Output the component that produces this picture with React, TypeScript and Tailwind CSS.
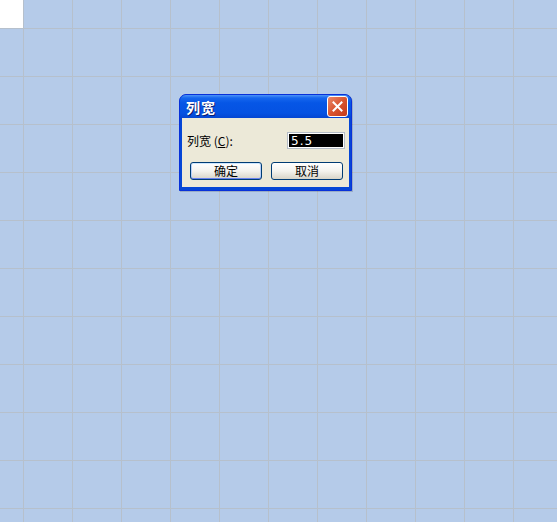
import React from "react";

const COLS = 12;
const ROWS = 12;

export default function App() {
  const cells: React.ReactNode[] = [];
  for (let r = 0; r < ROWS; r++) {
    for (let c = 0; c < COLS; c++) {
      cells.push(
        <div
          key={`${r}-${c}`}
          className={r === 0 && c === 0 ? "bg-white" : "bg-[#b5cbe9]"}
        />
      );
    }
  }
  return (
    <div className="relative w-[557px] h-[522px] overflow-hidden bg-[#b6c0cc] font-['Noto_Sans_CJK_SC',sans-serif]">
      <div className="grid grid-cols-[23px_repeat(11,48px)] grid-rows-[28px_repeat(11,47px)] gap-px">
        {cells}
      </div>

      {/* Dialog window */}
      <div className="absolute left-[179px] top-[94px] w-[173px] h-[97px] rounded-t-[7px] bg-[#0546d6] border border-[#0831d9] flex flex-col shadow-[1px_1px_0_rgba(0,0,0,0.15)]">
        {/* Title bar */}
        <div className="h-[23px] flex items-center justify-between pl-[6px] pr-[3px] rounded-t-[6px] bg-[linear-gradient(to_bottom,#4b93f8_0px,#1566ee_3px,#0656e6_8px,#0552e2_18px,#0446d2_23px)]">
          <span className="text-white text-[14px] font-bold leading-none [text-shadow:1px_1px_0_#0a1e70] tracking-[1px]">
            列宽
          </span>
          <div className="w-[21px] h-[21px] rounded-[3px] border border-white bg-gradient-to-br from-[#e8886a] via-[#d9542f] to-[#c2391a] flex items-center justify-center">
            <svg width="11" height="11" viewBox="0 0 11 11">
              <path d="M1.5 1.5 L9.5 9.5 M9.5 1.5 L1.5 9.5" stroke="white" strokeWidth="2" strokeLinecap="square" />
            </svg>
          </div>
        </div>
        {/* Body */}
        <div className="flex-1 mx-[2px] mb-[3px] bg-[#ece9d8] flex flex-col">
          <div className="mt-[14px] flex items-center justify-between pl-[5px] pr-[4px]">
            <span className="text-[12px] leading-none text-black">
              列宽 (<span className="underline">C</span>):
            </span>
            <div className="w-[58px] h-[17px] border border-[#b4bcc6] bg-white p-px flex">
              <div className="flex-1 bg-black text-white text-[12px] leading-[15px] pl-[2px] font-['DejaVu_Sans',sans-serif] tracking-[1px]">
                5.5
              </div>
            </div>
          </div>
          <div className="mt-[13px] flex gap-[9px] pl-[8px]">
            <button className="w-[72px] h-[18px] rounded-[3px] border border-[#003c74] bg-gradient-to-b from-[#ffffff] via-[#f4f3ee] to-[#d8d4c8] shadow-[inset_0_1px_0_#cee7ff,inset_0_-1px_0_#6982ee,inset_1px_0_0_#b8d0f8,inset_-1px_0_0_#b8d0f8] text-[12px] leading-none text-black flex items-center justify-center">
              确定
            </button>
            <button className="w-[72px] h-[18px] rounded-[3px] border border-[#003c74] bg-gradient-to-b from-[#ffffff] via-[#f4f3ee] to-[#d8d4c8] text-[12px] leading-none text-black flex items-center justify-center">
              取消
            </button>
          </div>
        </div>
      </div>
    </div>
  );
}
